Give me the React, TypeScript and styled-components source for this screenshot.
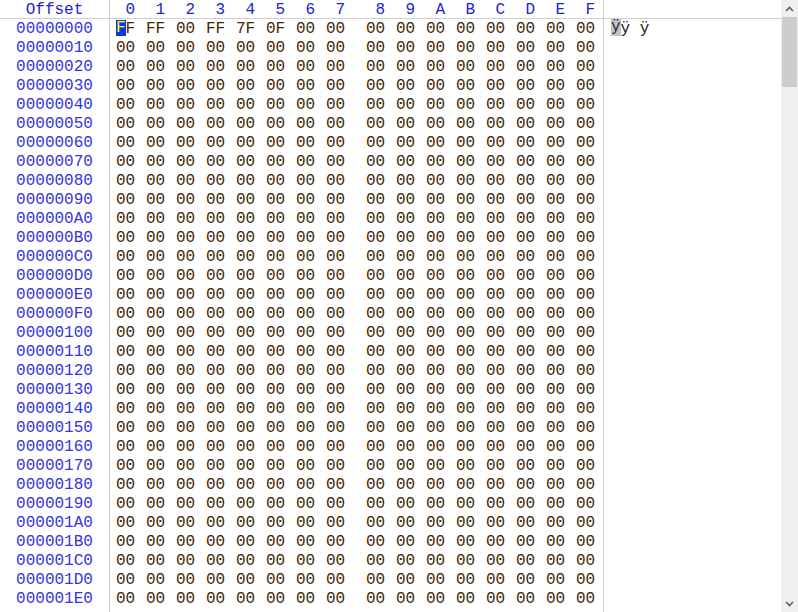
import React from "react";
import styled, { createGlobalStyle } from "styled-components";

const Global = createGlobalStyle`
  html, body { margin: 0; padding: 0; background: #ffffff; overflow: hidden; }
  #root { width: 798px; height: 612px; }
`;

const Root = styled.div`
  display: flex;
  width: 798px;
  height: 612px;
  font-family: "Liberation Mono", "Courier New", monospace;
  font-size: 16px;
  background: #ffffff;
  overflow: hidden;
`;

const Editor = styled.div`
  flex: 1;
  display: flex;
  min-width: 0;
`;

const Column = styled.div<{ $width?: number; $divider?: boolean }>`
  box-sizing: border-box;
  ${(p) => (p.$width ? `width: ${p.$width}px; flex: none;` : "flex: 1;")}
  border-right: ${(p) => (p.$divider ? "1px solid #cfcfcf" : "none")};
  display: flex;
  flex-direction: column;
`;

const HeaderCell = styled.div<{ $center?: boolean }>`
  box-sizing: border-box;
  height: 19px;
  padding-top: 2px;
  line-height: 16px;
  border-bottom: 1px solid #cfcfcf;
  white-space: pre;
  text-align: ${(p) => (p.$center ? "center" : "left")};
  color: #2323d0;
  flex: none;
`;

const OffsetRow = styled.div`
  box-sizing: border-box;
  height: 19px;
  padding-top: 1px;
  line-height: 18px;
  text-align: center;
  color: #3434dc;
`;

const HexGrid = styled.div`
  box-sizing: border-box;
  display: grid;
  grid-template-columns: repeat(7, 30px) 40px repeat(8, 30px);
  padding-left: 6px;
  padding-top: 1px;
  height: 19px;
  line-height: 18px;
  white-space: pre;
`;

const HexHeadGrid = styled(HexGrid)`
  height: 16px;
  padding-top: 0;
  line-height: 16px;
`;

const HeadDigit = styled.span`
  color: #2323d0;
`;

const ByteCell = styled.span`
  color: #3e2804;
`;

const Cursor = styled.span`
  display: inline-block;
  height: 16px;
  line-height: 16px;
  vertical-align: middle;
  margin-top: -2px;
  background: #0a3ae6;
  color: #ffff00;
`;

const CharRow = styled.div`
  box-sizing: border-box;
  height: 19px;
  padding-top: 1px;
  line-height: 18px;
  padding-left: 7px;
  white-space: pre;
  color: #1a1a2a;
`;

const CharMark = styled.span`
  display: inline-block;
  height: 17px;
  line-height: 17px;
  vertical-align: middle;
  margin-top: -2px;
  background: #c4c4c4;
  color: #2a2a40;
`;

const Scrollbar = styled.div`
  width: 17px;
  flex: none;
  background: #f0f0f0;
  display: flex;
  flex-direction: column;
`;

const ArrowButton = styled.div`
  height: 17px;
  flex: none;
  display: flex;
  align-items: center;
  justify-content: center;
`;

const Track = styled.div`
  flex: 1;
  display: flex;
  flex-direction: column;
  padding: 0 1px;
`;

const Thumb = styled.div`
  height: 70px;
  background: #cdcdcd;
`;

const Chevron = ({ down }: { down?: boolean }) => (
  <svg width="9" height="6" viewBox="0 0 9 6">
    <path
      d={down ? "M1 1 L4.5 4.5 L8 1" : "M1 5 L4.5 1.5 L8 5"}
      fill="none"
      stroke="#606060"
      strokeWidth="1.6"
    />
  </svg>
);

const headers = ["0", "1", "2", "3", "4", "5", "6", "7", "8", "9", "A", "B", "C", "D", "E", "F"];
const rowCount = 31;
const firstRow = ["FF", "FF", "00", "FF", "7F", "0F", "00", "00", "00", "00", "00", "00", "00", "00", "00", "00"];

function hexRow(r: number) {
  return r === 0 ? firstRow : Array(16).fill("00");
}

export default function App() {
  const rows = Array.from({ length: rowCount }, (_, i) => i);
  return (
    <>
      <Global />
      <Root>
        <Editor>
          <Column $width={110} $divider>
            <HeaderCell $center>Offset</HeaderCell>
            {rows.map((r) => (
              <OffsetRow key={r}>{(r * 16).toString(16).toUpperCase().padStart(8, "0")}</OffsetRow>
            ))}
          </Column>
          <Column $width={494} $divider>
            <HeaderCell>
              <HexHeadGrid>
                {headers.map((h) => (
                  <HeadDigit key={h}>{" " + h}</HeadDigit>
                ))}
              </HexHeadGrid>
            </HeaderCell>
            {rows.map((r) => (
              <HexGrid key={r}>
                {hexRow(r).map((b, i) =>
                  r === 0 && i === 0 ? (
                    <ByteCell key={i}>
                      <Cursor>{b[0]}</Cursor>
                      {b[1]}
                    </ByteCell>
                  ) : (
                    <ByteCell key={i}>{b}</ByteCell>
                  )
                )}
              </HexGrid>
            ))}
          </Column>
          <Column>
            <HeaderCell />
            {rows.map((r) =>
              r === 0 ? (
                <CharRow key={r}>
                  <CharMark>ÿ</CharMark>
                  {"ÿ ÿ"}
                </CharRow>
              ) : (
                <CharRow key={r} />
              )
            )}
          </Column>
        </Editor>
        <Scrollbar>
          <ArrowButton>
            <Chevron />
          </ArrowButton>
          <Track>
            <Thumb />
          </Track>
          <ArrowButton>
            <Chevron down />
          </ArrowButton>
        </Scrollbar>
      </Root>
    </>
  );
}
